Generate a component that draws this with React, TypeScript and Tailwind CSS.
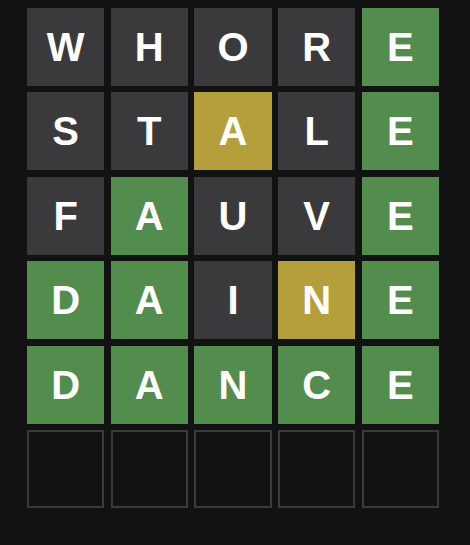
const rows: { letter: string; state: "absent" | "present" | "correct" }[][] = [
  [
    { letter: "W", state: "absent" },
    { letter: "H", state: "absent" },
    { letter: "O", state: "absent" },
    { letter: "R", state: "absent" },
    { letter: "E", state: "correct" },
  ],
  [
    { letter: "S", state: "absent" },
    { letter: "T", state: "absent" },
    { letter: "A", state: "present" },
    { letter: "L", state: "absent" },
    { letter: "E", state: "correct" },
  ],
  [
    { letter: "F", state: "absent" },
    { letter: "A", state: "correct" },
    { letter: "U", state: "absent" },
    { letter: "V", state: "absent" },
    { letter: "E", state: "correct" },
  ],
  [
    { letter: "D", state: "correct" },
    { letter: "A", state: "correct" },
    { letter: "I", state: "absent" },
    { letter: "N", state: "present" },
    { letter: "E", state: "correct" },
  ],
  [
    { letter: "D", state: "correct" },
    { letter: "A", state: "correct" },
    { letter: "N", state: "correct" },
    { letter: "C", state: "correct" },
    { letter: "E", state: "correct" },
  ],
];

const stateClass = {
  absent: "bg-[#3a3a3c]",
  present: "bg-[#b59f3b]",
  correct: "bg-[#538d4e]",
};

export default function App() {
  return (
    <div className="w-[470px] h-[545px] bg-[#121213] pt-[8px] pl-[27px]">
      <div
        className="grid grid-cols-5 grid-rows-6 gap-[6.5px] w-[412px] h-[500px] text-white font-bold text-[40px]"
        style={{ fontFamily: '"Liberation Sans", Arial, sans-serif' }}
      >
        {rows.flat().map((t, i) => (
          <div key={i} className={`flex items-center justify-center ${stateClass[t.state]}`}>
            {t.letter}
          </div>
        ))}
        {[0, 1, 2, 3, 4].map((i) => (
          <div key={"e" + i} className="border-2 border-[#3a3a3c]" />
        ))}
      </div>
    </div>
  );
}
